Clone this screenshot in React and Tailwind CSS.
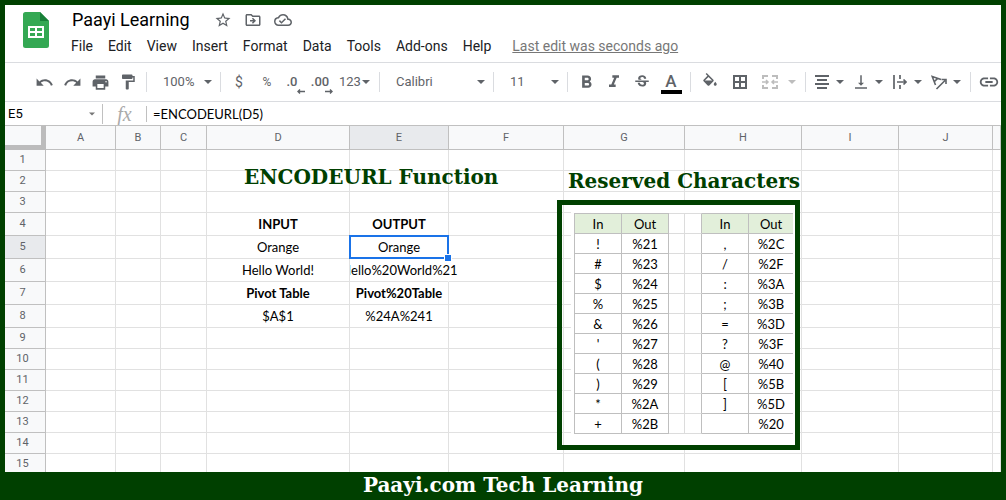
import React from 'react';
import {
  MdStarBorder, MdOutlineDriveFileMove, MdOutlineCloudDone, MdUndo, MdRedo, MdPrint, MdFormatPaint,
  MdFormatBold, MdFormatItalic, MdStrikethroughS,
  MdVerticalAlignBottom, MdInsertLink,
} from 'react-icons/md';

const menus = ['File', 'Edit', 'View', 'Insert', 'Format', 'Data', 'Tools', 'Add-ons', 'Help'];

const columns = [
  ['A', 'w-[70px]'], ['B', 'w-[45px]'], ['C', 'w-[46px]'], ['D', 'w-[143px]'], ['E', 'w-[99px]'],
  ['F', 'w-[115px]'], ['G', 'w-[121px]'], ['H', 'w-[117px]'], ['I', 'w-[97px]'], ['J', 'w-[94px]'], ['', 'w-auto'],
];

const cells = {
  D4: 'INPUT', E4: 'OUTPUT',
  D5: 'Orange', E5: 'Orange',
  D6: 'Hello World!', E6: 'Hello%20World%21',
  D7: 'Pivot Table', E7: 'Pivot%20Table',
  D8: '$A$1', E8: '%24A%241',
};

const reserved = [
  ['!', '%21', ',', '%2C'],
  ['#', '%23', '/', '%2F'],
  ['$', '%24', ':', '%3A'],
  ['%', '%25', ';', '%3B'],
  ['&', '%26', '=', '%3D'],
  ["'", '%27', '?', '%3F'],
  ['(', '%28', '@', '%40'],
  [')', '%29', '[', '%5B'],
  ['*', '%2A', ']', '%5D'],
  ['+', '%2B', '', '%20'],
];

function Caret({ className = 'w-2' }) {
  return (
    <svg viewBox="0 0 8 4" className={`h-1 shrink-0 fill-current ${className}`} aria-hidden="true">
      <path d="M0 0h8L4 4z" />
    </svg>
  );
}

function Separator() {
  return <div className="mx-1 h-5 w-px shrink-0 bg-[#dadce0]" />;
}

function Tool({ label, width = 'w-7', children }) {
  return (
    <button type="button" aria-label={label} className={`flex h-7 shrink-0 items-center justify-center ${width}`}>
      {children}
    </button>
  );
}

function DropTool({ label, children }) {
  return (
    <button type="button" aria-label={label} className="flex h-7 w-[39px] shrink-0 items-center">
      <span className="flex w-6 justify-center">{children}</span>
      <Caret className="ml-0.5 w-2" />
    </button>
  );
}

function Picker({ label, value, width }) {
  return (
    <div className={`grid shrink-0 items-center ${width}`}>
      <select aria-label={label} defaultValue={value} className="col-start-1 row-start-1 w-full appearance-none bg-transparent pl-3 text-[13px] leading-4 outline-none">
        <option>{value}</option>
      </select>
      <Caret className="pointer-events-none col-start-1 row-start-1 mr-1 w-2 justify-self-end" />
    </div>
  );
}

function DecimalTool({ label, text, direction }) {
  return (
    <button type="button" aria-label={label} className="flex h-7 w-7 shrink-0 flex-col items-center justify-center pt-1">
      <span className="pr-1.5 text-[13px] leading-[14px] font-medium">{text}</span>
      <svg viewBox="0 0 8 5" className="mr-1 h-[5px] w-2 self-end" fill="none" stroke="currentColor" strokeWidth="1.4">
        {direction === 'left' ? <path d="M8 2.5H1M3 .5l-2 2 2 2" /> : <path d="M0 2.5h7M5 .5l2 2-2 2" />}
      </svg>
    </button>
  );
}

function SheetsLogo() {
  return (
    <svg viewBox="0 0 26 36" className="h-9 w-[26px]" aria-label="Sheets">
      <path d="M2.500 0H17l9 9v24.500a2.500 2.500 0 0 1-2.500 2.500h-21A2.500 2.500 0 0 1 0 33.500v-31A2.500 2.500 0 0 1 2.500 0z" fill="#34a853" />
      <path d="M17 0l9 9h-9z" fill="#188038" />
      <path d="M5 14h16v12H5z" fill="#fff" />
      <path d="M7 16h5v3H7zM14 16h5v3h-5zM7 21h5v3H7zM14 21h5v3h-5z" fill="#34a853" />
    </svg>
  );
}

function Header() {
  return (
    <header className="flex h-[58px] shrink-0 items-start border-b border-[#dadce0] pt-[7px] pl-[18px]">
      <a href="#home" aria-label="Sheets home"><SheetsLogo /></a>
      <div className="pl-[22px]">
        <div className="flex h-4 items-center pl-px text-[#5f6368]">
          <h1 className="text-[18px] leading-5 text-black">Paayi Learning</h1>
          <div className="flex gap-3 pl-6">
            <button type="button" aria-label="Star"><MdStarBorder size={18} /></button>
            <button type="button" aria-label="Move"><MdOutlineDriveFileMove size={18} /></button>
            <button type="button" aria-label="Saved to cloud"><MdOutlineCloudDone size={18} /></button>
          </div>
        </div>
        <nav className="mt-2 flex items-center gap-[15px] text-[14px] leading-5 whitespace-nowrap text-[#202124]">
          {menus.map((m) => <button type="button" key={m}>{m}</button>)}
          <a href="#history" className="ml-1.5 text-[#777] underline">Last edit was seconds ago</a>
        </nav>
      </div>
    </header>
  );
}

function Toolbar() {
  return (
    <div className="flex h-[39px] shrink-0 items-center overflow-hidden border-b border-[#dadce0] pl-[25px] text-[#5f6368]">
      <Tool label="Undo"><MdUndo size={19} /></Tool>
      <Tool label="Redo"><MdRedo size={19} /></Tool>
      <Tool label="Print"><MdPrint size={19} /></Tool>
      <Tool label="Paint format"><MdFormatPaint size={18} /></Tool>
      <Separator />
      <Picker label="Zoom" value="100%" width="w-[65px]" />
      <Separator />
      <Tool label="Currency"><span className="text-[14px]">$</span></Tool>
      <Tool label="Percent"><span className="text-[12px]">%</span></Tool>
      <DecimalTool label="Decrease decimal places" text=".0" direction="left" />
      <DecimalTool label="Increase decimal places" text=".00" direction="right" />
      <button type="button" className="flex h-7 w-[38px] shrink-0 items-center pl-0.5 text-[13px]">
        123<Caret className="ml-px w-2" />
      </button>
      <Separator />
      <Picker label="Font" value="Calibri" width="w-[105px]" />
      <Separator />
      <Picker label="Font size" value="11" width="w-[65px]" />
      <Separator />
      <Tool label="Bold"><MdFormatBold size={21} /></Tool>
      <Tool label="Italic"><MdFormatItalic size={20} /></Tool>
      <Tool label="Strikethrough"><MdStrikethroughS size={18} /></Tool>
      <button type="button" aria-label="Text color" className="flex h-7 w-[30px] shrink-0 flex-col items-center justify-end gap-px pb-0.5">
        <span className="text-[17px] leading-[15px] font-medium">A</span>
        <span className="h-1 w-[21px] bg-black" />
      </button>
      <Separator />
      <Tool label="Fill color" width="w-[30px]">
        <svg viewBox="0 0 24 24" className="h-[18px] w-[18px] fill-current">
          <path d="M16.560 8.940L7.620 0 6.210 1.410l2.380 2.380-5.150 5.150a1.490 1.490 0 0 0 0 2.120l5.500 5.500c.290.290.680.440 1.060.440s.770-.150 1.060-.440l5.500-5.500c.590-.580.590-1.530 0-2.120zM5.210 10L10 5.210 14.790 10H5.210zM19 11.500s-2 2.170-2 3.500c0 1.100.900 2 2 2s2-.900 2-2c0-1.330-2-3.500-2-3.500z" />
        </svg>
      </Tool>
      <Tool label="Borders" width="w-[30px]">
        <svg viewBox="0 0 14 14" className="h-3.5 w-3.5" fill="none" stroke="currentColor" strokeWidth="2">
          <path d="M1 1h12v12H1zM7 1v12M1 7h12" />
        </svg>
      </Tool>
      <button type="button" aria-label="Merge cells" className="flex h-7 w-[46px] shrink-0 items-center pl-[7px] text-[#bdbdbd]">
        <svg viewBox="0 0 16 14" className="h-3.5 w-4" fill="none" stroke="currentColor" strokeWidth="2">
          <path d="M6 1H1v3M10 1h5v3M6 13H1v-3M10 13h5v-3" />
          <path d="M0 7h6M16 7h-6M4 5l2 2-2 2M12 5l-2 2 2 2" strokeWidth="1.500" />
        </svg>
        <Caret className="ml-2.5 w-2" />
      </button>
      <Separator />
      <DropTool label="Horizontal align">
        <svg viewBox="0 0 14 14" className="h-3.5 w-3.5 fill-current"><path d="M0 0h14v2H0zM2 4h10v2H2zM0 8h14v2H0zM2 12h10v2H2z" /></svg>
      </DropTool>
      <DropTool label="Vertical align"><MdVerticalAlignBottom size={18} /></DropTool>
      <DropTool label="Text wrapping">
        <svg viewBox="0 0 14 14" className="h-3.5 w-3.5" fill="none" stroke="currentColor" strokeWidth="1.700">
          <path d="M1 0v14M7 0v4M7 10v4M4 7h9M10.500 4.500L13 7l-2.500 2.500" />
        </svg>
      </DropTool>
      <DropTool label="Text rotation">
        <svg viewBox="0 0 16 15" className="h-[15px] w-4" fill="none" stroke="currentColor" strokeWidth="1.600">
          <path d="M4.500 10L1.200 1.500 10 4.500M3.200 6.800L6.700 3.400" />
          <path d="M5.500 14L14 5.500M10.500 4.500H15V9" />
        </svg>
      </DropTool>
      <Separator />
      <Tool label="Insert link"><MdInsertLink size={22} /></Tool>
    </div>
  );
}

function FormulaBar() {
  return (
    <div className="flex h-[23px] shrink-0 items-center">
      <div className="flex w-[97px] shrink-0 items-center pr-[7px] pl-[3px]">
        <input aria-label="Name box" defaultValue="E5" className="min-w-0 flex-1 text-[13px] leading-4 text-black outline-none" />
        <Caret className="w-1.5 text-[#777]" />
      </div>
      <div className="h-5 w-px bg-[#c0c0c0]" />
      <label htmlFor="formula" className="flex w-[43px] justify-center font-['Liberation_Serif',serif] text-[20px] leading-5 text-[#aaa] italic">fx</label>
      <div className="h-4 w-px bg-[#c0c0c0]" />
      <input id="formula" defaultValue="=ENCODEURL(D5)" className="min-w-0 flex-1 pl-1.5 font-['Lato',sans-serif] text-[13px] leading-4 text-black outline-none" />
    </div>
  );
}

function CellContent({ id }) {
  if (id === 'E5') {
    return (
      <>
        Orange
        <div className="absolute -inset-px z-10 border-2 border-[#1a73e8]" />
        <div className="absolute -right-1 -bottom-1 z-10 h-2 w-2 border border-white bg-[#1a73e8]" />
      </>
    );
  }
  if (id === 'E6') {
    return (
      <div className="relative flex w-[115px] justify-center overflow-hidden pr-4">
        <span>{cells[id]}</span>
      </div>
    );
  }
  return cells[id] ?? null;
}

function Sheet() {
  return (
    <table className="w-full table-fixed border-separate border-spacing-0">
      <colgroup>
        <col className="w-[41px]" />
        {columns.map(([name, w]) => <col key={name} className={w} />)}
      </colgroup>
      <thead>
        <tr className="h-[25px] text-[11px] leading-3 text-[#5f6368]">
          <td className="border-t border-r-[5px] border-b-[5px] border-[#bcbcbc] border-t-[#c0c0c0] bg-[#f8f9fa] p-0" />
          {columns.map(([name]) => (
            <th key={name} scope="col" className={`border-y border-r border-[#c0c0c0] p-0 font-normal ${name === 'E' ? 'bg-[#e8eaed]' : 'bg-[#f8f9fa]'}`}>{name}</th>
          ))}
        </tr>
      </thead>
      <tbody>
        {Array.from({ length: 15 }, (_, i) => i + 1).map((row) => (
          <tr key={row} className={row >= 4 && row <= 8 ? 'h-[23px]' : 'h-[21px]'}>
            <th scope="row" className={`border-r border-b border-[#c0c0c0] p-0 pr-[5px] text-[11px] leading-3 font-normal text-[#5f6368] ${row === 5 ? 'bg-[#e8eaed]' : 'bg-[#f8f9fa]'}`}>{row}</th>
            {columns.map(([name]) => (
              <td
                key={name}
                className={`relative border-r border-b border-b-[#e1e1e1] p-0 text-center font-['Lato',sans-serif] text-[13px] leading-4 whitespace-nowrap text-black ${name + row === 'E6' ? 'border-r-transparent' : 'border-r-[#e1e1e1]'} ${row === 4 || row === 7 ? 'font-bold' : ''}`}
              >
                <CellContent id={name + row} />
              </td>
            ))}
          </tr>
        ))}
      </tbody>
    </table>
  );
}

function ReservedTable() {
  const line = 'border-b border-r border-[#bfbfbf] p-0';
  const faint = 'border-b border-[#dcdcdc] p-0';
  return (
    <table className="w-[219px] table-fixed border-separate border-spacing-0 text-center font-['Lato',sans-serif] text-[13px] leading-4 text-black">
      <colgroup>
        <col className="w-12" /><col className="w-[47px]" /><col className="w-4" /><col className="w-[17px]" /><col className="w-[47px]" /><col className="w-11" />
      </colgroup>
      <thead>
        <tr className="h-[21px]">
          <th className={`${line} border-t border-l bg-[#e2efda] font-normal`}>In</th>
          <th className={`${line} border-t bg-[#e2efda] font-normal`}>Out</th>
          <td className={`${faint} border-t border-r`} />
          <td className={`${faint} border-t border-r border-r-[#bfbfbf]`} />
          <th className={`${line} border-t bg-[#e2efda] font-normal`}>In</th>
          <th className={`${line} border-t border-r-0 bg-[#e2efda] font-normal`}>Out</th>
        </tr>
      </thead>
      <tbody>
        {reserved.map(([a, b, c, d]) => (
          <tr key={b} className="h-5">
            <td className={`${line} border-l`}>{a}</td>
            <td className={line}>{b}</td>
            <td className={`${faint} border-r`} />
            <td className={`${faint} border-r border-r-[#bfbfbf]`} />
            <td className={line}>{c}</td>
            <td className={`${line} border-r-0`}>{d}</td>
          </tr>
        ))}
      </tbody>
    </table>
  );
}

const heading = "font-['DejaVu_Serif',serif] leading-6 font-bold whitespace-nowrap";

export default function App() {
  return (
    <div className="flex h-screen flex-col overflow-hidden bg-[#004000] px-[5px] pt-[5px] font-['Roboto',sans-serif]">
      <div className="flex min-h-0 flex-1 flex-col overflow-hidden bg-white">
        <Header />
        <Toolbar />
        <FormulaBar />
        <main className="relative min-h-0 flex-1 overflow-hidden">
          <Sheet />
          <h2 className={`absolute top-10 left-[239px] text-[20px] text-[#004000] ${heading}`}>ENCODEURL Function</h2>
          <h2 className={`absolute top-11 left-[563px] text-[20px] text-[#004000] ${heading}`}>Reserved Characters</h2>
          <div className="absolute top-[75px] left-[552px] h-[250px] w-[243px] border-[5px] border-[#004000]" />
          <div className="absolute top-20 left-[566px] h-[240px] w-[224px] bg-white pt-2 pl-[3px]">
            <ReservedTable />
          </div>
        </main>
      </div>
      <footer className={`flex h-7 shrink-0 items-center justify-center pb-0.5 text-[20px] text-white ${heading}`}>Paayi.com Tech Learning</footer>
    </div>
  );
}
